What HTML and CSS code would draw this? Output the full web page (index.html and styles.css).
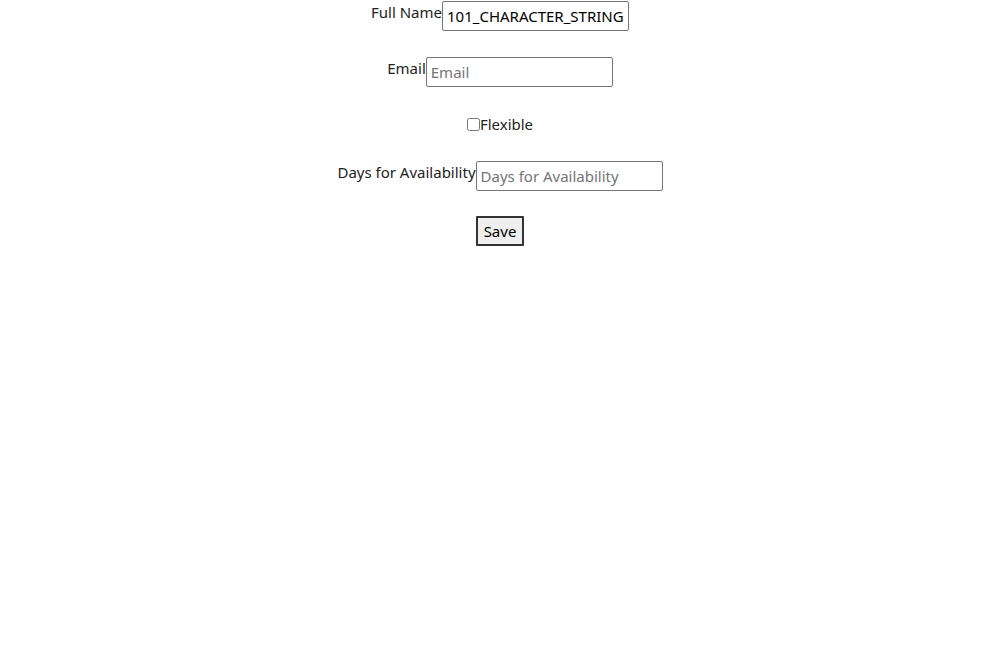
FILE: index.html
```html
<!DOCTYPE html>
<html>
<head>
<meta charset="utf-8">
<link rel="stylesheet" href="styles.css">
</head>
<body>
<form class="form">
  <div class="row">
    <label class="label">Full Name</label>
    <input class="field" type="text" value="101_CHARACTER_STRING">
  </div>
  <div class="row">
    <label class="label">Email</label>
    <input class="field" type="text" placeholder="Email">
  </div>
  <div class="row row-check">
    <input class="check" type="checkbox">
    <label class="label">Flexible</label>
  </div>
  <div class="row">
    <label class="label">Days for Availability</label>
    <input class="field" type="text" placeholder="Days for Availability">
  </div>
  <div class="row row-save">
    <button class="btn" type="button">Save</button>
  </div>
</form>
</body>
</html>
```

FILE: styles.css
```css
html, body {
  margin: 0;
  padding: 0;
  background: #ffffff;
}
body {
  font-family: "Noto Sans", "Open Sans", sans-serif;
  font-size: 15px;
  color: #222222;
}
.form {
  display: flex;
  flex-direction: column;
  align-items: center;
  gap: 26px;
  padding-top: 1px;
}
.row {
  display: flex;
  align-items: flex-start;
}
.label {
  line-height: 22px;
}
.field {
  box-sizing: border-box;
  width: 187px;
  height: 30px;
  margin: 0;
  padding: 0 3px 1px 4px;
  border: 1px solid #767676;
  border-radius: 2px;
  font-family: inherit;
  font-size: 15px;
  color: #000000;
  background: #ffffff;
}
.field::placeholder {
  color: #757575;
}
.row-check {
  align-items: center;
  height: 22px;
}
.check {
  width: 13px;
  height: 13px;
  margin: 0;
}
.row-save {
  margin-top: -1px;
}
.btn {
  box-sizing: border-box;
  width: 48px;
  height: 30px;
  margin: 0;
  padding: 0 0 1px;
  border: 2px solid #333333;
  border-radius: 1px;
  background: #efefef;
  font-family: inherit;
  font-size: 15px;
  color: #000000;
}
```
